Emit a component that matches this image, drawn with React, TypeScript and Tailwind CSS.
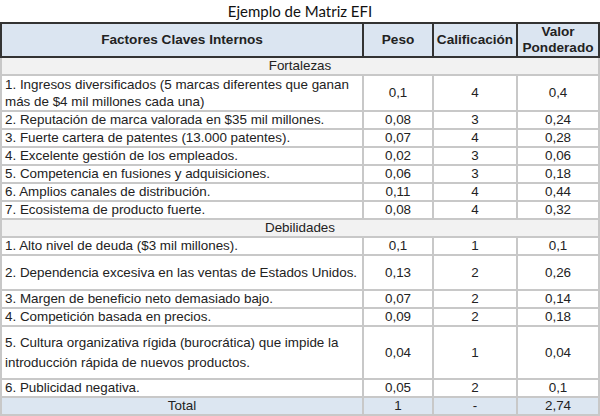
const fortalezas = [
  { f: "1. Ingresos diversificados (5 marcas diferentes que ganan más de $4 mil millones cada una)", p: "0,1", c: "4", v: "0,4", h: "h-[35px]", lh: "leading-[17px]" },
  { f: "2. Reputación de marca valorada en $35 mil millones.", p: "0,08", c: "3", v: "0,24", h: "h-[18px]", lh: "leading-[14px]" },
  { f: "3. Fuerte cartera de patentes (13.000 patentes).", p: "0,07", c: "4", v: "0,28", h: "h-[18px]", lh: "leading-[14px]" },
  { f: "4. Excelente gestión de los empleados.", p: "0,02", c: "3", v: "0,06", h: "h-[18px]", lh: "leading-[14px]" },
  { f: "5. Competencia en fusiones y adquisiciones.", p: "0,06", c: "3", v: "0,18", h: "h-[18px]", lh: "leading-[14px]" },
  { f: "6. Amplios canales de distribución.", p: "0,11", c: "4", v: "0,44", h: "h-[18px]", lh: "leading-[14px]" },
  { f: "7. Ecosistema de producto fuerte.", p: "0,08", c: "4", v: "0,32", h: "h-[18px]", lh: "leading-[14px]" },
]

const debilidades = [
  { f: "1. Alto nivel de deuda ($3 mil millones).", p: "0,1", c: "1", v: "0,1", h: "h-[18px]", lh: "leading-[14px]" },
  { f: "2. Dependencia excesiva en las ventas de Estados Unidos.", p: "0,13", c: "2", v: "0,26", h: "h-[35px]", lh: "leading-[14px]" },
  { f: "3. Margen de beneficio neto demasiado bajo.", p: "0,07", c: "2", v: "0,14", h: "h-[18px]", lh: "leading-[14px]" },
  { f: "4. Competición basada en precios.", p: "0,09", c: "2", v: "0,18", h: "h-[18px]", lh: "leading-[14px]" },
  { f: "5. Cultura organizativa rígida (burocrática) que impide la introducción rápida de nuevos productos.", p: "0,04", c: "1", v: "0,04", h: "h-[53px]", lh: "leading-[20px]" },
  { f: "6. Publicidad negativa.", p: "0,05", c: "2", v: "0,1", h: "h-[18px]", lh: "leading-[14px]" },
]

type RowData = { f: string; p: string; c: string; v: string; h: string; lh: string }

function Row({ f, p, c, v, h, lh }: RowData) {
  return (
    <tr className={h}>
      <td className={`border-2 border-[#c8c8c8] px-[3px] py-0 ${lh}`}>{f}</td>
      <td className="border-2 border-[#c8c8c8] text-center leading-[14px]">{p}</td>
      <td className="border-2 border-[#c8c8c8] text-center leading-[14px]">{c}</td>
      <td className="border-2 border-[#c8c8c8] text-center leading-[14px]">{v}</td>
    </tr>
  )
}

function Section({ label }: { label: string }) {
  return (
    <tr className="h-[18px] bg-[#f2f2f2]">
      <td colSpan={4} className="border-2 border-[#c8c8c8] text-center leading-[14px]">{label}</td>
    </tr>
  )
}

export default function App() {
  return (
    <div className="w-[600px] h-[416px] bg-white overflow-hidden">
      <div className="h-[22px] text-center text-[15px] leading-[22px] text-[#111]" style={{ fontFamily: "Lato, sans-serif" }}>
        Ejemplo de Matriz EFI
      </div>
      <table
        className="w-[598px] border-collapse text-[13.4px] text-[#222] table-fixed"
        style={{ fontFamily: "'Liberation Sans', Arial, sans-serif" }}
      >
        <colgroup>
          <col className="w-[362px]" />
          <col className="w-[70px]" />
          <col className="w-[84px]" />
          <col className="w-[82px]" />
        </colgroup>
        <thead>
          <tr className="h-[34px] bg-[#dbe5f1] font-bold text-[13.6px]">
            <th className="border-2 border-[#333] leading-[16px]">Factores Claves Internos</th>
            <th className="border-2 border-[#333] leading-[16px]">Peso</th>
            <th className="border-2 border-[#333] leading-[16px]">Calificación</th>
            <th className="border-2 border-[#333] leading-[16px]">Valor Ponderado</th>
          </tr>
        </thead>
        <tbody>
          <Section label="Fortalezas" />
          {fortalezas.map((r) => (
            <Row key={r.f} {...r} />
          ))}
          <Section label="Debilidades" />
          {debilidades.map((r) => (
            <Row key={r.f} {...r} />
          ))}
          <tr className="h-[18px] bg-[#dce6f1]">
            <td className="border-2 border-[#c8c8c8] text-center leading-[14px]">Total</td>
            <td className="border-2 border-[#c8c8c8] text-center leading-[14px]">1</td>
            <td className="border-2 border-[#c8c8c8] text-center leading-[14px]">-</td>
            <td className="border-2 border-[#c8c8c8] text-center leading-[14px]">2,74</td>
          </tr>
        </tbody>
      </table>
    </div>
  )
}
